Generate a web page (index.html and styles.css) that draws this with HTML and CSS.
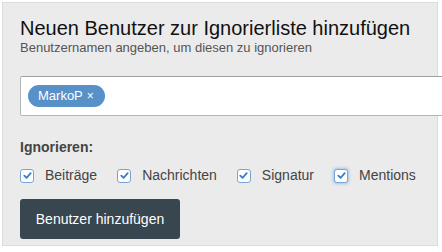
FILE: index.html
```html
<!DOCTYPE html>
<html lang="de">
<head>
<meta charset="utf-8">
<link rel="stylesheet" href="styles.css">
</head>
<body>
<div class="panel">
  <h1 class="title">Neuen Benutzer zur Ignorierliste hinzufügen</h1>
  <p class="subtitle">Benutzernamen angeben, um diesen zu ignorieren</p>
  <div class="tag-input">
    <span class="tag">MarkoP <span class="tag-x">×</span></span>
  </div>
  <div class="label">Ignorieren:</div>
  <div class="options">
    <label class="opt"><span class="box"><svg viewBox="0 0 12 12" width="11" height="11"><path d="M2.5 6.2 L5 8.5 L9.5 3.5" fill="none" stroke="#3d7fc1" stroke-width="2" stroke-linecap="round" stroke-linejoin="round"/></svg></span>Beiträge</label>
    <label class="opt"><span class="box"><svg viewBox="0 0 12 12" width="11" height="11"><path d="M2.5 6.2 L5 8.5 L9.5 3.5" fill="none" stroke="#3d7fc1" stroke-width="2" stroke-linecap="round" stroke-linejoin="round"/></svg></span>Nachrichten</label>
    <label class="opt"><span class="box"><svg viewBox="0 0 12 12" width="11" height="11"><path d="M2.5 6.2 L5 8.5 L9.5 3.5" fill="none" stroke="#3d7fc1" stroke-width="2" stroke-linecap="round" stroke-linejoin="round"/></svg></span>Signatur</label>
    <label class="opt"><span class="box focus"><svg viewBox="0 0 12 12" width="11" height="11"><path d="M2.5 6.2 L5 8.5 L9.5 3.5" fill="none" stroke="#3d7fc1" stroke-width="2" stroke-linecap="round" stroke-linejoin="round"/></svg></span>Mentions</label>
  </div>
  <button class="btn">Benutzer hinzufügen</button>
</div>
</body>
</html>
```

FILE: styles.css
```css
html, body {
  margin: 0;
  padding: 0;
  background: #fff;
}
body {
  font-family: "Liberation Sans", Arial, sans-serif;
  width: 442px;
  height: 252px;
  overflow: hidden;
  padding: 2px 0 0 2px;
  box-sizing: border-box;
}
.panel {
  width: 436px;
  box-sizing: border-box;
  background: #ebebeb;
  border: 1px solid #dcdcdc;
  padding: 13px 0 6px 17px;
}
.title {
  margin: 0;
  font-size: 20px;
  font-weight: normal;
  line-height: 24px;
  color: #111;
}
.subtitle {
  margin: 0;
  font-size: 13px;
  line-height: 16px;
  color: #555;
}
.tag-input {
  margin-top: 20px;
  width: 440px;
  height: 40px;
  box-sizing: border-box;
  background: #fff;
  border: 1px solid #b5b5b5;
  border-top-color: #a0a0a0;
  border-radius: 2px 0 0 2px;
  padding: 8px 7px;
  display: flex;
  align-items: flex-start;
}
.tag {
  display: inline-flex;
  align-items: center;
  height: 22px;
  padding: 0 11px 0 10px;
  border-radius: 11px;
  background: #5890c8;
  color: #fff;
  font-size: 13px;
  line-height: 22px;
}
.tag-x {
  margin-left: 4px;
  font-size: 12px;
}
.label {
  margin-top: 23px;
  font-size: 14px;
  font-weight: bold;
  line-height: 16px;
  color: #444;
}
.options {
  margin-top: 10px;
  display: flex;
  gap: 20px;
  height: 20px;
  align-items: center;
}
.opt {
  display: flex;
  align-items: center;
  gap: 11px;
  font-size: 14px;
  line-height: 20px;
  color: #444;
}
.box {
  width: 14px;
  height: 14px;
  box-sizing: border-box;
  border: 1px solid #76a6d6;
  border-radius: 3px;
  background: #fff;
  display: flex;
  align-items: center;
  justify-content: center;
  margin-top: 1px;
}
.box.focus {
  box-shadow: 0 0 3px 1px rgba(100, 160, 230, 0.55);
}
.btn {
  margin-top: 14px;
  display: block;
  width: 160px;
  height: 40px;
  border: 0;
  border-radius: 3px;
  background: #37464f;
  color: #fff;
  font-family: "Liberation Sans", Arial, sans-serif;
  font-size: 14px;
  padding: 0;
}
```
